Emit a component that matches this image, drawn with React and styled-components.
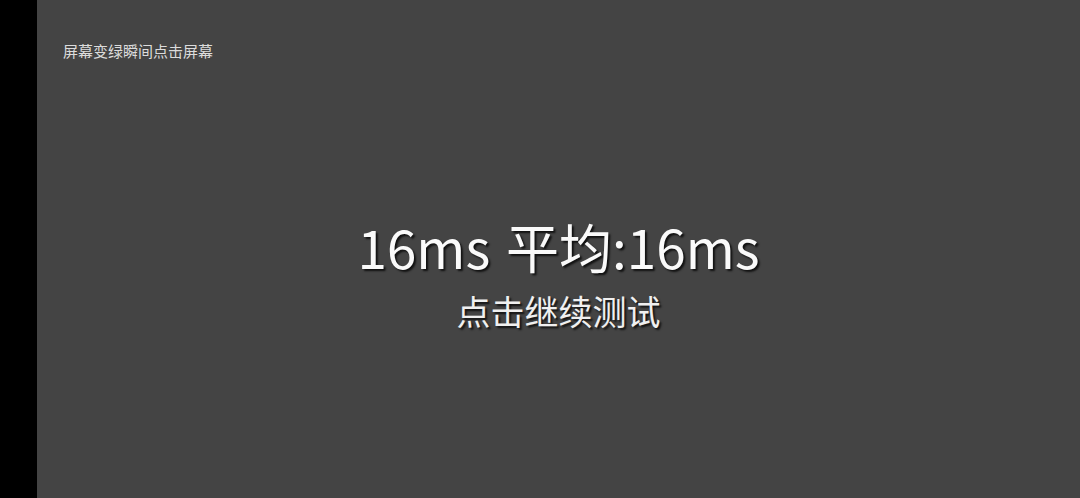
import React from "react";
import styled, { createGlobalStyle } from "styled-components";

const GlobalStyle = createGlobalStyle`
  html, body {
    margin: 0;
    padding: 0;
    background: #000;
  }
  #root {
    height: 100vh;
  }
`;

const Screen = styled.div`
  display: flex;
  height: 498px;
  width: 1080px;
  font-family: "Noto Sans CJK SC", "Noto Sans", sans-serif;
`;

const Edge = styled.div`
  width: 37px;
  flex-shrink: 0;
  background: #000;
`;

const Panel = styled.div`
  flex: 1;
  display: flex;
  flex-direction: column;
  background: #444444;
  padding: 40px 26px 0;
`;

const Hint = styled.div`
  font-size: 15px;
  line-height: 22px;
  color: #dcdcdc;
`;

const Result = styled.div`
  flex: 1;
  display: flex;
  flex-direction: column;
  align-items: center;
  justify-content: center;
  padding-bottom: 11px;
  color: #fafafa;
  text-shadow: 2px 2px 2px rgba(0, 0, 0, 0.75);
`;

const Time = styled.div`
  font-size: 53px;
  line-height: 60px;
  font-weight: 400;
  word-spacing: 4px;
`;

const Again = styled.div`
  margin-top: 13px;
  font-size: 34px;
  line-height: 44px;
  color: #f0f0f0;
`;

const App = () => {
  return (
    <>
      <GlobalStyle />
      <Screen>
        <Edge />
        <Panel>
          <Hint>屏幕变绿瞬间点击屏幕</Hint>
          <Result>
            <Time>16ms 平均:16ms</Time>
            <Again>点击继续测试</Again>
          </Result>
        </Panel>
      </Screen>
    </>
  );
};

export default App;
